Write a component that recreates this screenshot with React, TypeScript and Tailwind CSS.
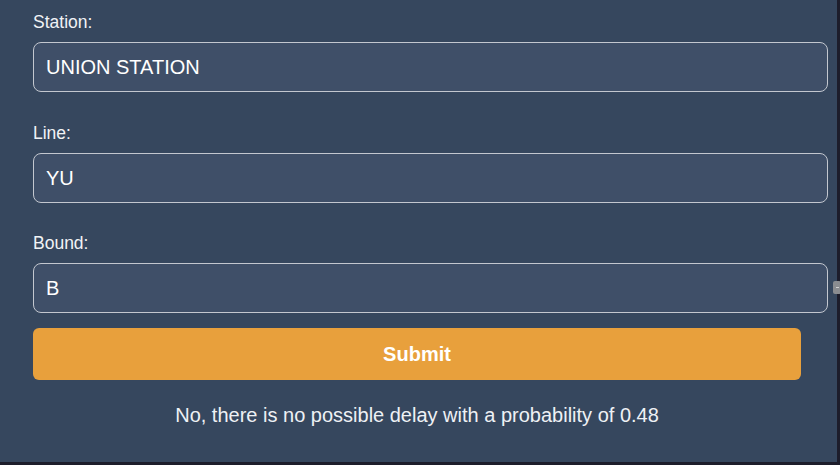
export default function App() {
  const fields = [
    { label: "Station:", value: "UNION STATION", gap: "" },
    { label: "Line:", value: "YU", gap: "mt-[31px]" },
    { label: "Bound:", value: "B", gap: "mt-[30px]" },
  ];

  return (
    <div className="w-[840px] h-[465px] bg-[#1d1d2b] overflow-hidden font-['Liberation_Sans',Arial,sans-serif]">
      <div className="relative w-[837px] h-[462px] bg-[#36475e] px-[33px] pt-[12px]">
        {fields.map((f) => (
          <div key={f.label} className={f.gap}>
            <label className="block text-[17.5px] leading-[20px] text-[#f1f3f6] mb-[10px]">{f.label}</label>
            <input
              readOnly
              value={f.value}
              className="block w-[795px] h-[50px] px-[12px] rounded-[8px] border border-[#c3c7cf] bg-[#3f4f68] text-white text-[20px] outline-none"
            />
          </div>
        ))}

        <button className="mt-[15px] w-[768px] h-[52px] rounded-[6px] bg-[#e8a03c] text-white font-bold text-[20px]">
          Submit
        </button>

        <p className="w-[768px] mt-[23px] text-center text-[20px] leading-[24px] text-[#eef1f5]">
          No, there is no possible delay with a probability of 0.48
        </p>

        {/* scroll nub at the edge */}
        <div className="absolute left-[833px] top-[281px] w-[8px] h-[13px] rounded-[2px] bg-[#8a8c90] flex items-center justify-center">
          <div className="w-[3px] h-[1px] bg-[#d0d0d0]" />
        </div>
      </div>
    </div>
  );
}
